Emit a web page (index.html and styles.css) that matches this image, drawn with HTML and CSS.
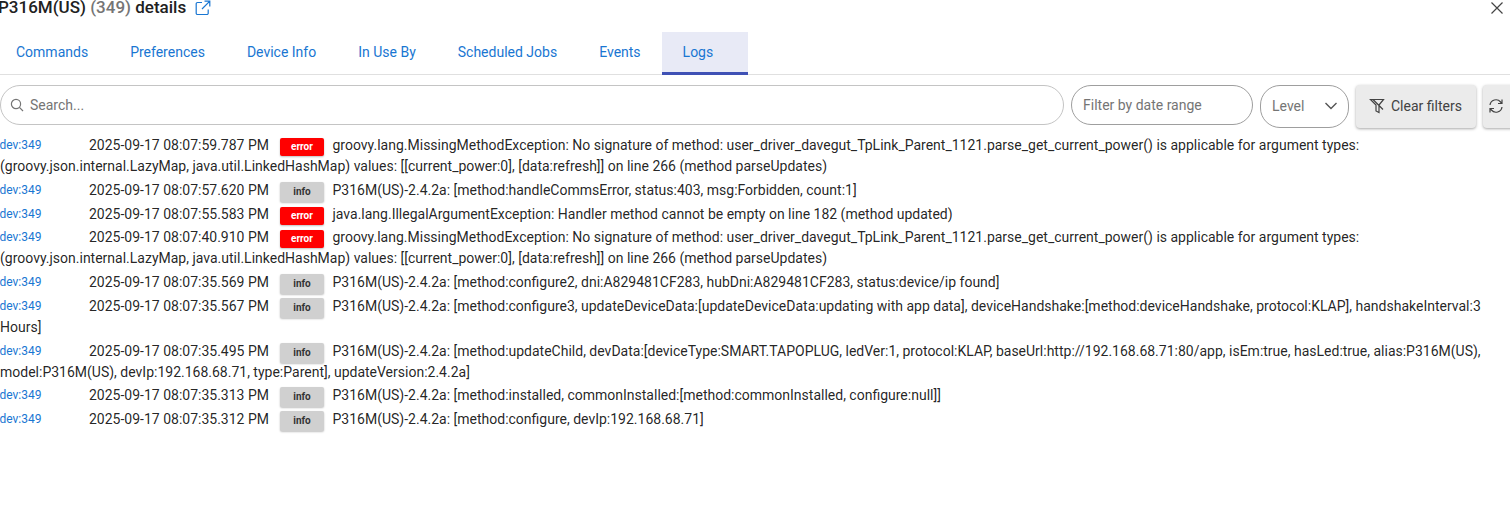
FILE: index.html
```html
<!DOCTYPE html>
<html lang="en">
<head>
<meta charset="utf-8">
<title>P316M(US) details</title>
<link rel="stylesheet" href="styles.css">
</head>
<body>
<header class="title-bar">
  <h1 class="title">P316M(US) <span class="title-id">(349)</span> details</h1>
  <svg class="open-icon" viewBox="0 0 16 16" width="16" height="16" aria-hidden="true"><path d="M7 2.500H2.500a1.300 1.300 0 0 0-1.300 1.300v9.400a1.300 1.300 0 0 0 1.300 1.300h9.400a1.300 1.300 0 0 0 1.300-1.300V9.500M9.500 1.200h5.300v5.300M14.800 1.200 7 9" /></svg>
  <svg class="close-icon" viewBox="0 0 14 14" width="14" height="14" aria-hidden="true"><path d="M1.500 1.500l11 11M12.500 1.500l-11 11"/></svg>
</header>
<nav class="tabs">
  <a class="tab">Commands</a>
  <a class="tab">Preferences</a>
  <a class="tab">Device Info</a>
  <a class="tab">In Use By</a>
  <a class="tab">Scheduled Jobs</a>
  <a class="tab">Events</a>
  <a class="tab tab-active">Logs</a>
</nav>
<section class="filters">
  <div class="pill search">
    <svg class="search-icon" viewBox="0 0 14 14" width="14" height="14" aria-hidden="true"><circle cx="6" cy="6" r="4.600"/><path d="M9.400 9.400l3.600 3.600"/></svg>
    <span>Search...</span>
  </div>
  <div class="pill date"><span>Filter by date range</span></div>
  <div class="pill level">
    <span>Level</span>
    <svg class="chevron" viewBox="0 0 14 8" width="14" height="8" aria-hidden="true"><path d="M1.500 1l5.500 5.500L12.500 1"/></svg>
  </div>
  <button class="btn clear">
    <svg class="btn-icon" viewBox="0 0 16 16" width="16" height="16" aria-hidden="true"><path d="M1.500 1.500h13L10 7v7.500l-3-1.500V7zM4 1.500l10 10"/></svg>
    Clear filters
  </button>
  <button class="btn refresh" aria-label="Refresh">
    <svg class="btn-icon" viewBox="0 0 16 16" width="16" height="16" aria-hidden="true"><path d="M2 7a6 6 0 0 1 10.600-3L14 5.500M14 1.500v4h-4M14 9a6 6 0 0 1-10.600 3L2 10.500M2 14.500v-4h4"/></svg>
  </button>
</section>
<main class="logs">
  <div class="row"><a class="dev">dev:349</a><span class="time">2025-09-17 08:07:59.787 PM</span><span class="chip chip-error">error</span><span class="msg">groovy.lang.MissingMethodException: No signature of method: user_driver_davegut_TpLink_Parent_1121.parse_get_current_power() is applicable for argument types: (groovy.json.internal.LazyMap, java.util.LinkedHashMap) values: [[current_power:0], [data:refresh]] on line 266 (method parseUpdates)</span></div>
  <div class="row"><a class="dev">dev:349</a><span class="time">2025-09-17 08:07:57.620 PM</span><span class="chip chip-info">info</span><span class="msg">P316M(US)-2.4.2a: [method:handleCommsError, status:403, msg:Forbidden, count:1]</span></div>
  <div class="row"><a class="dev">dev:349</a><span class="time">2025-09-17 08:07:55.583 PM</span><span class="chip chip-error">error</span><span class="msg">java.lang.IllegalArgumentException: Handler method cannot be empty on line 182 (method updated)</span></div>
  <div class="row"><a class="dev">dev:349</a><span class="time">2025-09-17 08:07:40.910 PM</span><span class="chip chip-error">error</span><span class="msg">groovy.lang.MissingMethodException: No signature of method: user_driver_davegut_TpLink_Parent_1121.parse_get_current_power() is applicable for argument types: (groovy.json.internal.LazyMap, java.util.LinkedHashMap) values: [[current_power:0], [data:refresh]] on line 266 (method parseUpdates)</span></div>
  <div class="row"><a class="dev">dev:349</a><span class="time">2025-09-17 08:07:35.569 PM</span><span class="chip chip-info">info</span><span class="msg">P316M(US)-2.4.2a: [method:configure2, dni:A829481CF283, hubDni:A829481CF283, status:device/ip found]</span></div>
  <div class="row"><a class="dev">dev:349</a><span class="time">2025-09-17 08:07:35.567 PM</span><span class="chip chip-info">info</span><span class="msg">P316M(US)-2.4.2a: [method:configure3, updateDeviceData:[updateDeviceData:updating with app data], deviceHandshake:[method:deviceHandshake, protocol:KLAP], handshakeInterval:3 Hours]</span></div>
  <div class="row"><a class="dev">dev:349</a><span class="time">2025-09-17 08:07:35.495 PM</span><span class="chip chip-info">info</span><span class="msg">P316M(US)-2.4.2a: [method:updateChild, devData:[deviceType:SMART.TAPOPLUG, ledVer:1, protocol:KLAP, baseUrl:http://192.168.68.71:80/app, isEm:true, hasLed:true, alias:P316M(US), model:P316M(US), devIp:192.168.68.71, type:Parent], updateVersion:2.4.2a]</span></div>
  <div class="row"><a class="dev">dev:349</a><span class="time">2025-09-17 08:07:35.313 PM</span><span class="chip chip-info">info</span><span class="msg">P316M(US)-2.4.2a: [method:installed, commonInstalled:[method:commonInstalled, configure:null]]</span></div>
  <div class="row"><a class="dev">dev:349</a><span class="time">2025-09-17 08:07:35.312 PM</span><span class="chip chip-info">info</span><span class="msg">P316M(US)-2.4.2a: [method:configure, devIp:192.168.68.71]</span></div>
</main>
</body>
</html>
```
FILE: styles.css
```css
* { box-sizing: border-box; }
html, body { margin: 0; padding: 0; height: 100%; overflow: hidden; background: #fff; }
body { font-family: Roboto, "Liberation Sans", sans-serif; color: rgba(0,0,0,.87); font-size: 14px; }

.title-bar { display: flex; align-items: center; height: 32px; padding-bottom: 17px; position: relative; }
.title { margin: 0 0 0 -2px; font-size: 17px; line-height: 15px; font-weight: 500; color: #212121; white-space: nowrap; }
.title-id { color: #757575; }
.open-icon { margin-left: 9px; fill: none; stroke: #1976d2; stroke-width: 1.2; }
.close-icon { position: absolute; right: 6px; top: 1px; fill: none; stroke: #444; stroke-width: 1.2; }

.tabs { display: flex; height: 43px; border-bottom: 1px solid #e0e0e0; }
.tab { display: flex; align-items: center; height: 42px; padding: 0 21px 2px 16px; font-size: 14px; color: #1976d2; }
.tab:nth-child(n+2) { padding-left: 21px; }
.tab.tab-active { background: #e8eaf6; border-bottom: 3px solid #3f51b5; padding: 0 35px 0 21px; margin-bottom: -1px; height: 43px; }

.filters { display: flex; align-items: flex-start; padding-top: 10px; height: 60px; white-space: nowrap; }
.pill { display: flex; flex: none; align-items: center; height: 40px; border: 1px solid #c4c4c4; border-radius: 20px; color: #757575; font-size: 14px; }
.search { width: 1064px; padding-left: 9px; }
.search-icon { margin-right: 6px; fill: none; stroke: #757575; stroke-width: 1.2; }
.date { width: 182px; margin-left: 7px; padding-left: 11px; border-color: #9e9e9e; }
.level { width: 89px; height: 43px; margin-left: 7px; padding: 0 10px 2px 11px; justify-content: space-between; border-color: #9e9e9e; }
.chevron { fill: none; stroke: #555; stroke-width: 1.4; }
.btn { display: flex; flex: none; align-items: center; height: 43px; border: 0; border-radius: 4px; background: #ebebeb; box-shadow: 0 1px 3px rgba(0,0,0,.35); font: inherit; color: #424242; cursor: pointer; }
.clear { width: 120px; margin-left: 7px; padding: 0 0 2px 13px; gap: 6px; }
.refresh { width: 40px; margin-left: 7px; padding: 0 0 2px 5px; }
.btn-icon { flex: none; fill: none; stroke: #424242; stroke-width: 1.2; }

.logs { line-height: 21px; }
.row { margin-bottom: 2.75px; }
.dev { display: inline-block; width: 89px; margin-left: -0.5px; margin-right: 0.5px; font-size: 12px; color: #1976d2; vertical-align: top; }
.time { display: inline-block; width: 191px; vertical-align: top; }
.chip { display: inline-block; width: 44px; height: 20px; margin: 2px 8.5px -1px 0; border-radius: 2px; font-size: 10px; font-weight: 700; line-height: 20px; text-align: center; vertical-align: top; box-shadow: 0 1px 2px rgba(0,0,0,.25); }
.chip-error { height: 18px; line-height: 18px; margin-top: 3px; background: #f00; color: #fff; }
.chip-info { background: #d0d0d0; color: #333; }
```
